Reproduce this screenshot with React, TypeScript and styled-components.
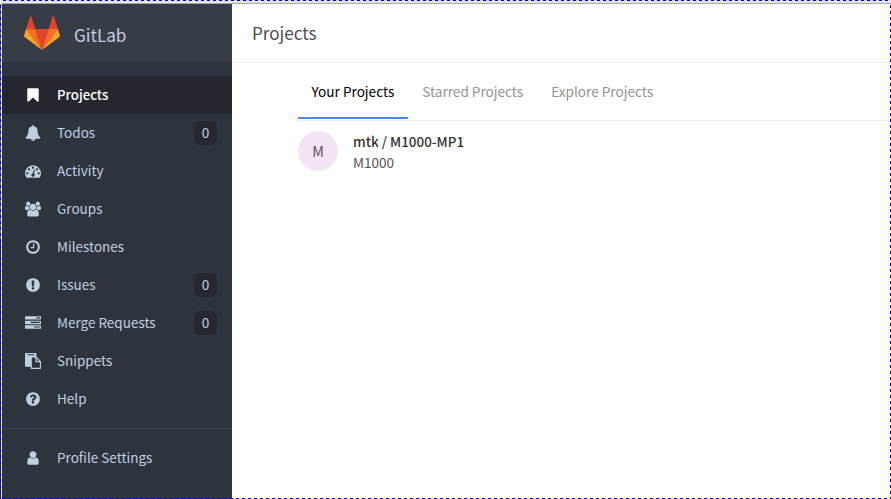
import React from 'react';
import styled, { createGlobalStyle } from 'styled-components';

const GlobalStyle = createGlobalStyle`
  * { box-sizing: border-box; }
  body {
    margin: 0;
    background: #fff;
    overflow: hidden;
    font-family: "Noto Sans CJK SC", "Noto Sans", sans-serif;
    font-size: 13.5px;
  }
`;

const dash = '#0000f5';

const Frame = styled.div`
  position: relative;
  width: 891px;
  height: 499px;
  display: flex;
  flex-direction: column;
  padding-left: 1px;
`;

const DashedEdges = styled.div`
  position: absolute;
  inset: 0;
  pointer-events: none;
  background:
    repeating-linear-gradient(90deg, ${dash} 0 3px, transparent 3px 6px) 3px 0 / 100% 1px no-repeat,
    repeating-linear-gradient(90deg, ${dash} 0 3px, transparent 3px 6px) 2px 498px / 100% 1px no-repeat,
    repeating-linear-gradient(180deg, ${dash} 0 3px, transparent 3px 6px) 0 5px / 1px 100% no-repeat,
    repeating-linear-gradient(180deg, ${dash} 0 3px, transparent 3px 6px) 890px 5px / 1px 100% no-repeat,
    linear-gradient(180deg, #6b7378 0 238px, #22262b 238px) 0 4px / 1px 100% no-repeat;
`;

const WindowEdge = styled.div`
  height: 4px;
  flex: none;
  background: #e3e3e3;
  border-bottom: 1px solid #acacac;
`;

const Columns = styled.div`
  flex: 1;
  display: flex;
  border-left: 1px solid #e3e3e3;
`;

const Sidebar = styled.aside`
  width: 230px;
  flex: none;
  background: #2d343d;
  color: #c2cfe0;
`;

const Brand = styled.div`
  height: 58px;
  display: flex;
  align-items: center;
  gap: 14px;
  padding-left: 22px;
  background: #373d47;
  font-size: 17.1px;
`;

const BrandName = styled.span`
  padding-top: 2px;
`;

const Nav = styled.nav`
  padding-top: 14px;
`;

const NavItem = styled.a<{ $active?: boolean }>`
  height: 38px;
  display: flex;
  align-items: center;
  padding: 0 15px 0 22px;
  color: ${p => (p.$active ? '#fff' : 'inherit')};
  background: ${p => (p.$active ? '#24272e' : 'transparent')};
  font-size: ${p => (p.$active ? '13.2px' : '13.5px')};
  font-weight: ${p => (p.$active ? 500 : 400)};
`;

const IconCell = styled.span`
  width: 18px;
  margin-right: 15px;
  display: flex;
  justify-content: center;
`;

const Label = styled.span<{ $active?: boolean }>`
  flex: 1;
  line-height: 20px;
  padding-bottom: ${p => (p.$active ? '0' : '2px')};
`;

const Count = styled.span`
  width: 23px;
  height: 24px;
  border-radius: 6px;
  background: #24272e;
  line-height: 23px;
  text-align: center;
`;

const Divider = styled.div`
  height: 1px;
  margin: 10px 0;
  background: #373d47;
`;

const Main = styled.main`
  flex: 1;
  display: flex;
  flex-direction: column;
`;

const Header = styled.header`
  height: 59px;
  padding: 0 20px;
  border-bottom: 1px solid #eee;
  color: #4c4e54;
  font-size: 17.1px;
  line-height: 58px;
`;

const Content = styled.section`
  padding-left: 66px;
`;

const Tabs = styled.div`
  height: 58px;
  display: flex;
  border-bottom: 1px solid #eee;
`;

const Tab = styled.a<{ $active?: boolean }>`
  height: 56px;
  padding: 0 13.5px;
  margin-right: 1px;
  font-size: 13.6px;
  line-height: 56px;
  color: ${p => (p.$active ? '#000' : '#959494')};
  border-bottom: 2px solid ${p => (p.$active ? '#4688f1' : 'transparent')};
`;

const Project = styled.div`
  display: flex;
  gap: 15px;
  padding-top: 10px;
`;

const Avatar = styled.div`
  width: 40px;
  height: 40px;
  border-radius: 50%;
  background: #f3e5f5;
  color: #555;
  font-size: 14.4px;
  line-height: 40px;
  text-align: center;
`;

const ProjectText = styled.div`
  line-height: 21px;
  color: #555;
`;

const ProjectName = styled.div`
  font-size: 13.45px;
  font-weight: 500;
  color: #333;
`;

const ring = 'q0 209-103 385.5t-279.5 279.5-385.5 103-385.5-103-279.5-279.5-103-385.5 103-385.5 279.5-279.5 385.5-103 385.5 103 279.5 279.5 103 385.5z';

const paths = {
  bookmark: 'M1420 128q23 0 44 9 33 13 52.5 41t19.5 62v1289q0 34-19.5 62t-52.5 41q-19 8-44 8-48 0-83-32l-441-424-441 424q-36 33-83 33-23 0-44-9-33-13-52.5-41t-19.5-62v-1289q0-34 19.5-62t52.5-41q21-9 44-9h1048z',
  bell: 'M912 1696q0-16-16-16-59 0-101.5-42.5t-42.5-101.5q0-16-16-16t-16 16q0 73 51.5 124.5t124.5 51.5q16 0 16-16zm816-288q0 52-38 90t-90 38h-448q0 106-75 181t-181 75-181-75-75-181h-448q-52 0-90-38t-38-90q50-42 91-88t85-119.5 74.5-158.5 50-206 19.5-260q0-152 117-282.5t307-158.5q-8-19-8-39 0-40 28-68t68-28 68 28 28 68q0 20-8 39 190 28 307 158.5t117 282.5q0 139 19.5 260t50 206 74.5 158.5 85 119.5 91 88z',
  dashboard: 'M384 1152q0-53-37.5-90.5t-90.5-37.5-90.5 37.5-37.5 90.5 37.5 90.5 90.5 37.5 90.5-37.5 37.5-90.5zm192-448q0-53-37.5-90.5t-90.5-37.5-90.5 37.5-37.5 90.5 37.5 90.5 90.5 37.5 90.5-37.5 37.5-90.5zm428 481l101-382q6-26-7.5-48.5t-38.5-29.5-48 6.5-30 39.5l-101 382q-60 5-107 43.5t-63 98.5q-20 77 20 146t117 89 146-20 89-117q16-60-6-117t-72-91zm660-33q0-53-37.5-90.5t-90.5-37.5-90.5 37.5-37.5 90.5 37.5 90.5 90.5 37.5 90.5-37.5 37.5-90.5zm-640-640q0-53-37.5-90.5t-90.5-37.5-90.5 37.5-37.5 90.5 37.5 90.5 90.5 37.5 90.5-37.5 37.5-90.5zm448 192q0-53-37.5-90.5t-90.5-37.5-90.5 37.5-37.5 90.5 37.5 90.5 90.5 37.5 90.5-37.5 37.5-90.5zm320 448q0 261-141 483-19 29-54 29h-1402q-35 0-54-29-141-221-141-483 0-182 71-348t191-286 286-191 348-71 348 71 286 191 191 286 71 348z',
  users: 'M593 896q-162 5-265 128h-134q-82 0-138-40.5t-56-118.5q0-353 124-353 6 0 43.5 21t97.5 42.5 119 21.5q67 0 133-23-5 37-5 66 0 139 81 256zm1071 637q0 120-73 189.5t-194 69.5h-874q-121 0-194-69.5t-73-189.5q0-53 3.5-103.5t14-109 26.5-108.5 43-97.5 62-81 85.5-53.5 111.5-20q10 0 43 21.5t73 48 107 48 135 21.5 135-21.5 107-48 73-48 43-21.5q61 0 111.5 20t85.5 53.5 62 81 43 97.5 26.5 108.5 14 109 3.5 103.5zm-1024-1277q0 106-75 181t-181 75-181-75-75-181 75-181 181-75 181 75 75 181zm704 384q0 159-112.5 271.5t-271.5 112.5-271.5-112.5-112.5-271.5 112.5-271.5 271.5-112.5 271.5 112.5 112.5 271.5zm576 225q0 78-56 118.5t-138 40.5h-134q-103-123-265-128 81-117 81-256 0-29-5-66 66 23 133 23 59 0 119-21.5t97.5-42.5 43.5-21q124 0 124 353zm-128-609q0 106-75 181t-181 75-181-75-75-181 75-181 181-75 181 75 75 181z',
  clock: 'M1024 544v448q0 14-9 23t-23 9h-320q-14 0-23-9t-9-23v-64q0-14 9-23t23-9h224v-352q0-14 9-23t23-9h64q14 0 23 9t9 23zm416 352q0-148-73-273t-198-198-273-73-273 73-198 198-73 273 73 273 198 198 273 73 273-73 198-198 73-273zm224 0' + ring,
  exclamation: 'M896 128q209 0 385.5 103t279.5 279.5 103 385.5-103 385.5-279.5 279.5-385.5 103-385.5-103-279.5-279.5-103-385.5 103-385.5 279.5-279.5 385.5-103zm128 1247v-190q0-14-9-23.5t-22-9.5h-192q-13 0-23 10t-10 23v190q0 13 10 23t23 10h192q13 0 22-9.5t9-23.5zm-2-344l18-621q0-12-10-18-10-8-24-8h-220q-14 0-24 8-10 6-10 18l17 621q0 10 10 17.5t24 7.5h185q14 0 23.5-7.5t10.5-17.5z',
  tasks: 'M1024 1408h640v-128h-640v128zm-384-512h1024v-128h-1024v128zm640-512h384v-128h-384v128zm512 832v256q0 26-19 45t-45 19h-1664q-26 0-45-19t-19-45v-256q0-26 19-45t45-19h1664q26 0 45 19t19 45zm0-512v256q0 26-19 45t-45 19h-1664q-26 0-45-19t-19-45v-256q0-26 19-45t45-19h1664q26 0 45 19t19 45zm0-512v256q0 26-19 45t-45 19h-1664q-26 0-45-19t-19-45v-256q0-26 19-45t45-19h1664q26 0 45 19t19 45z',
  paste: 'M768 1664h896v-640h-416q-40 0-68-28t-28-68v-416h-384v1152zm256-1440v-64q0-13-9.5-22.5t-22.5-9.5h-704q-13 0-22.5 9.5t-9.5 22.5v64q0 13 9.5 22.5t22.5 9.5h704q13 0 22.5-9.5t9.5-22.5zm256 672h299l-299-299v299zm512 128v672q0 40-28 68t-68 28h-960q-40 0-68-28t-28-68v-160h-544q-40 0-68-28t-28-68v-1344q0-40 28-68t68-28h1088q40 0 68 28t28 68v328q21 13 36 28l408 408q28 28 48 76t20 88z',
  question: 'M1024 1376v-192q0-14-9-23t-23-9h-192q-14 0-23 9t-9 23v192q0 14 9 23t23 9h192q14 0 23-9t9-23zm256-672q0-88-55.5-163t-138.5-116-170-41q-243 0-371 213-15 24 8 42l132 100q7 6 19 6 16 0 25-12 53-68 86-92 34-24 86-24 48 0 85.5 26t37.5 59q0 38-20 61t-68 45q-63 28-115.5 86.5t-52.5 125.5v36q0 14 9 23t23 9h192q14 0 23-9t9-23q0-19 21.5-49.5t54.5-49.5q32-18 49-28.5t46-35 44.5-48 28-60.5 12.5-81zm384 192' + ring,
  user: 'M1536 1399q0 109-62.5 187t-150.5 78h-854q-88 0-150.5-78t-62.5-187q0-85 8.5-160.5t31.5-152 58.5-131 94-89 134.5-34.5q131 128 313 128t313-128q76 0 134.5 34.5t94 89 58.5 131 31.5 152 8.5 160.5zm-256-887q0 159-112.5 271.5t-271.5 112.5-271.5-112.5-112.5-271.5 112.5-271.5 271.5-112.5 271.5 112.5 112.5 271.5z',
};

type IconName = keyof typeof paths;

function Icon({ name }: { name: IconName }) {
  return (
    <svg width="16" height="16" viewBox={name === 'users' ? '0 -64 1920 1920' : '0 0 1792 1792'} fill="currentColor">
      <path d={paths[name]} />
    </svg>
  );
}

function Logo() {
  return (
    <svg width="36" height="34" viewBox="0 0 210 194" preserveAspectRatio="none">
      <path fill="#e24329" d="M105.06 193.66 143.7 74.73H66.42z" />
      <path fill="#fc6d26" d="M105.06 193.66 66.42 74.73H12.27zM105.06 193.66 143.7 74.73h54.15z" />
      <path fill="#fca326" d="M12.27 74.73.53 110.87c-1.07 3.3.1 6.91 2.9 8.94l101.63 73.85zM197.85 74.73l11.74 36.14c1.07 3.3-.1 6.91-2.9 8.94l-101.63 73.85z" />
      <path fill="#e24329" d="M12.27 74.73h54.15L43.15 3.11c-1.2-3.69-6.41-3.69-7.61 0zM197.85 74.73H143.7l23.27-71.62c1.2-3.69 6.41-3.69 7.61 0z" />
    </svg>
  );
}

const items: { icon: IconName; label: string; count?: number; active?: boolean }[] = [
  { icon: 'bookmark', label: 'Projects', active: true },
  { icon: 'bell', label: 'Todos', count: 0 },
  { icon: 'dashboard', label: 'Activity' },
  { icon: 'users', label: 'Groups' },
  { icon: 'clock', label: 'Milestones' },
  { icon: 'exclamation', label: 'Issues', count: 0 },
  { icon: 'tasks', label: 'Merge Requests', count: 0 },
  { icon: 'paste', label: 'Snippets' },
  { icon: 'question', label: 'Help' },
];

export default function App() {
  return (
    <Frame>
      <GlobalStyle />
      <WindowEdge />
      <Columns>
        <Sidebar>
          <Brand>
            <Logo />
            <BrandName>GitLab</BrandName>
          </Brand>
          <Nav>
            {items.map(item => (
              <NavItem key={item.label} $active={item.active}>
                <IconCell><Icon name={item.icon} /></IconCell>
                <Label $active={item.active}>{item.label}</Label>
                {item.count !== undefined && <Count>{item.count}</Count>}
              </NavItem>
            ))}
            <Divider />
            <NavItem>
              <IconCell><Icon name="user" /></IconCell>
              <Label>Profile Settings</Label>
            </NavItem>
          </Nav>
        </Sidebar>
        <Main>
          <Header>Projects</Header>
          <Content>
            <Tabs>
              <Tab $active>Your Projects</Tab>
              <Tab>Starred Projects</Tab>
              <Tab>Explore Projects</Tab>
            </Tabs>
            <Project>
              <Avatar>M</Avatar>
              <ProjectText>
                <ProjectName>mtk / M1000-MP1</ProjectName>
                <div>M1000</div>
              </ProjectText>
            </Project>
          </Content>
        </Main>
      </Columns>
      <DashedEdges />
    </Frame>
  );
}
